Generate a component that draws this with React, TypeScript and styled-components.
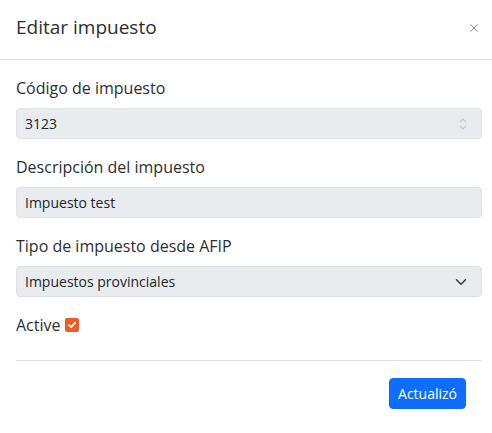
import React from "react";
import styled, { createGlobalStyle } from "styled-components";

const Global = createGlobalStyle`
  html, body { margin: 0; padding: 0; background: #fff; overflow: hidden; }
  body { font-family: "Open Sans", "Noto Sans", sans-serif; color: #212529; }
  * { box-sizing: border-box; }
`;

const Modal = styled.div`
  width: 498px;
  background: #fff;
`;

const Header = styled.div`
  display: flex;
  align-items: flex-start;
  justify-content: space-between;
  height: 60px;
  padding: 12px 16px 17px;
  border-bottom: 1px solid #dee2e6;
`;

const Title = styled.h5`
  margin: 0;
  font-size: 19px;
  font-weight: 400;
  line-height: 30px;
  color: #2b2f33;
`;

const Close = styled.button`
  width: 16px;
  height: 16px;
  margin-top: 8px;
  padding: 0;
  border: 0;
  background: transparent;
  display: flex;
  align-items: center;
  justify-content: center;
  cursor: pointer;
`;

const Body = styled.div`
  padding: 16px 16px 0;
`;

const Group = styled.div`
  margin-bottom: 16px;
`;

const Label = styled.label`
  display: block;
  font-size: 16px;
  line-height: 24px;
  margin-bottom: 8px;
  color: #2b2f33;
`;

const Field = styled.div<{ $padRight?: number }>`
  display: flex;
  align-items: center;
  justify-content: space-between;
  height: 31px;
  padding: 0 ${(p) => p.$padRight ?? 8}px 0 8px;
  font-size: 14px;
  line-height: 21px;
  color: #212529;
  background: #e9ecef;
  border: 1px solid #dee2e6;
  border-radius: 4px;
  width: 466px;
`;

const CheckRow = styled.div`
  display: flex;
  align-items: center;
  gap: 4px;
  font-size: 16px;
  line-height: 24px;
  margin-bottom: 23px;
  color: #2b2f33;
`;

const CheckBox = styled.span`
  width: 14px;
  height: 14px;
  border-radius: 2px;
  background: #f05a24;
  display: inline-flex;
  align-items: center;
  justify-content: center;
`;

const Divider = styled.hr`
  margin: 0;
  border: 0;
  border-top: 1px solid #dee2e6;
  width: 466px;
`;

const Footer = styled.div`
  display: flex;
  justify-content: flex-end;
  width: 466px;
  padding: 17px 16px 24px;
`;

const Button = styled.button`
  font-family: "Open Sans", "Noto Sans", sans-serif;
  font-size: 14px;
  line-height: 21px;
  padding: 4px 8px;
  border: 1px solid #0d6efd;
  background: #0d6efd;
  color: #fff;
  border-radius: 4px;
  cursor: pointer;
`;

const Spinner = () => (
  <svg width="8" height="14" viewBox="0 0 8 14" fill="none" stroke="#c3c6c9" strokeWidth="1.1">
    <path d="M1 5 L4 2 L7 5" />
    <path d="M1 9 L4 12 L7 9" />
  </svg>
);

const Chevron = () => (
  <svg width="16" height="12" viewBox="0 0 16 16" fill="none" stroke="#343a40" strokeWidth="2" strokeLinecap="round" strokeLinejoin="round">
    <path d="M2 5l6 6 6-6" />
  </svg>
);

export default function App() {
  return (
    <>
      <Global />
      <Modal>
        <Header>
          <Title>Editar impuesto</Title>
          <Close aria-label="Close">
            <svg width="8" height="8" viewBox="0 0 8 8" stroke="#8a8d90" strokeWidth="1">
              <path d="M0.5 0.5 L7.5 7.5 M7.5 0.5 L0.5 7.5" />
            </svg>
          </Close>
        </Header>
        <Body>
          <Group>
            <Label>Código de impuesto</Label>
            <Field $padRight={14}>
              <span>3123</span>
              <Spinner />
            </Field>
          </Group>
          <Group>
            <Label>Descripción del impuesto</Label>
            <Field>
              <span>Impuesto test</span>
            </Field>
          </Group>
          <Group>
            <Label>Tipo de impuesto desde AFIP</Label>
            <Field $padRight={12}>
              <span>Impuestos provinciales</span>
              <Chevron />
            </Field>
          </Group>
          <CheckRow>
            <span>Active</span>
            <CheckBox>
              <svg width="10" height="10" viewBox="0 0 10 10" fill="none" stroke="#fff" strokeWidth="1.8" strokeLinecap="round" strokeLinejoin="round">
                <path d="M2 5.2 L4.1 7.2 L8 2.8" />
              </svg>
            </CheckBox>
          </CheckRow>
          <Divider />
          <Footer>
            <Button>Actualizó</Button>
          </Footer>
        </Body>
      </Modal>
    </>
  );
}
